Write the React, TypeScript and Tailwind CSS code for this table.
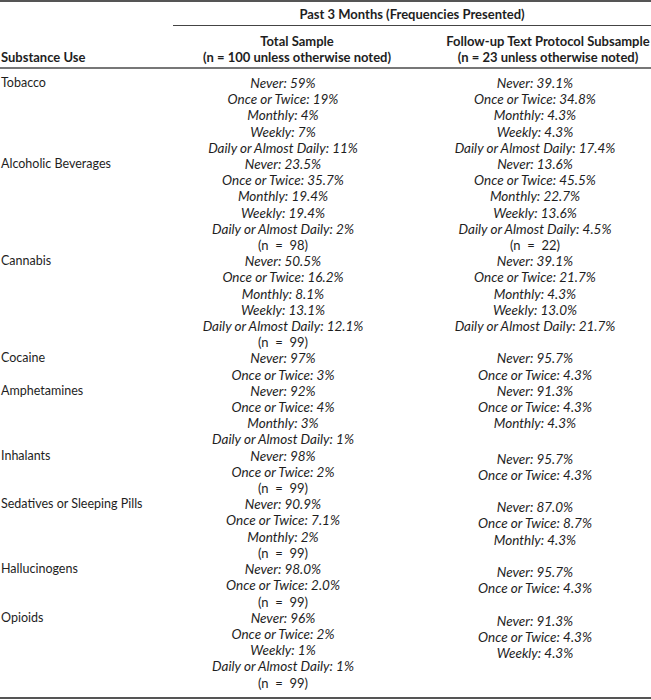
const rows = [
  {
    name: "Tobacco",
    total: ["Never: 59%", "Once or Twice: 19%", "Monthly: 4%", "Weekly: 7%", "Daily or Almost Daily: 11%"],
    sub: ["Never: 39.1%", "Once or Twice: 34.8%", "Monthly: 4.3%", "Weekly: 4.3%", "Daily or Almost Daily: 17.4%"],
  },
  {
    name: "Alcoholic Beverages",
    total: ["Never: 23.5%", "Once or Twice: 35.7%", "Monthly: 19.4%", "Weekly: 19.4%", "Daily or Almost Daily: 2%"],
    totalN: "98",
    sub: ["Never: 13.6%", "Once or Twice: 45.5%", "Monthly: 22.7%", "Weekly: 13.6%", "Daily or Almost Daily: 4.5%"],
    subN: "22",
  },
  {
    name: "Cannabis",
    total: ["Never: 50.5%", "Once or Twice: 16.2%", "Monthly: 8.1%", "Weekly: 13.1%", "Daily or Almost Daily: 12.1%"],
    totalN: "99",
    sub: ["Never: 39.1%", "Once or Twice: 21.7%", "Monthly: 4.3%", "Weekly: 13.0%", "Daily or Almost Daily: 21.7%"],
  },
  {
    name: "Cocaine",
    total: ["Never: 97%", "Once or Twice: 3%"],
    sub: ["Never: 95.7%", "Once or Twice: 4.3%"],
  },
  {
    name: "Amphetamines",
    total: ["Never: 92%", "Once or Twice: 4%", "Monthly: 3%", "Daily or Almost Daily: 1%"],
    sub: ["Never: 91.3%", "Once or Twice: 4.3%", "Monthly: 4.3%"],
  },
  {
    name: "Inhalants",
    total: ["Never: 98%", "Once or Twice: 2%"],
    totalN: "99",
    sub: ["Never: 95.7%", "Once or Twice: 4.3%"],
    shift: true,
  },
  {
    name: "Sedatives or Sleeping Pills",
    total: ["Never: 90.9%", "Once or Twice: 7.1%", "Monthly: 2%"],
    totalN: "99",
    sub: ["Never: 87.0%", "Once or Twice: 8.7%", "Monthly: 4.3%"],
    shift: true,
  },
  {
    name: "Hallucinogens",
    total: ["Never: 98.0%", "Once or Twice: 2.0%"],
    totalN: "99",
    sub: ["Never: 95.7%", "Once or Twice: 4.3%"],
    shift: true,
  },
  {
    name: "Opioids",
    total: ["Never: 96%", "Once or Twice: 2%", "Weekly: 1%", "Daily or Almost Daily: 1%"],
    totalN: "99",
    sub: ["Never: 91.3%", "Once or Twice: 4.3%", "Weekly: 4.3%"],
    shift: true,
  },
]

type CellProps = { lines: string[]; n?: string; className: string }

const Cell = ({ lines, n, className }: CellProps) => (
  <div className={`flex flex-col items-center ${className}`}>
    {lines.map((l) => (
      <span key={l} className="italic whitespace-nowrap text-[13.5px]">
        {l}
      </span>
    ))}
    {n && <span className="whitespace-nowrap text-[13px]">(n&nbsp;&nbsp;=&nbsp;&nbsp;{n})</span>}
  </div>
)

export default function App() {
  return (
    <div className="w-[651px] h-[700px] bg-white text-[#1e1e1e] text-[12.5px] leading-[16.2px] font-['Lato','Open_Sans',sans-serif]">
      <div className="border-t-2 border-b-2 border-[#555]">
        {/* header */}
        <div className="grid grid-cols-[173px_478px] h-[24px]">
          <div />
          <div className="flex items-center justify-center font-bold text-[13px] border-b border-[#444] pt-[1px]">
            Past 3 Months (Frequencies Presented)
          </div>
        </div>
        <div className="grid grid-cols-[173px_220px_258px] h-[43px] font-bold text-[13px] border-b-2 border-[#777]">
          <div className="flex items-end pl-[1px] pb-[2px]">Substance Use</div>
          <div className="flex flex-col items-center justify-end pl-[28px] whitespace-nowrap pb-[2px]">
            <span>Total Sample</span>
            <span>(n = 100 unless otherwise noted)</span>
          </div>
          <div className="flex flex-col items-center justify-end pl-[52px] whitespace-nowrap pb-[2px]">
            <span>Follow-up Text Protocol Subsample</span>
            <span>(n = 23 unless otherwise noted)</span>
          </div>
        </div>

        {/* body */}
        <div className="flex flex-col pt-[6px] pb-[6px]">
          {rows.map((r) => (
            <div key={r.name} className="grid grid-cols-[173px_220px_258px]">
              <div className="pl-[1px] whitespace-nowrap">{r.name}</div>
              <Cell lines={r.total} n={r.totalN} className="" />
              <Cell lines={r.sub} n={r.subN} className={r.shift ? "pl-[26px] pt-[3px] -mb-[3px]" : "pl-[26px]"} />
            </div>
          ))}
        </div>
      </div>
    </div>
  )
}
